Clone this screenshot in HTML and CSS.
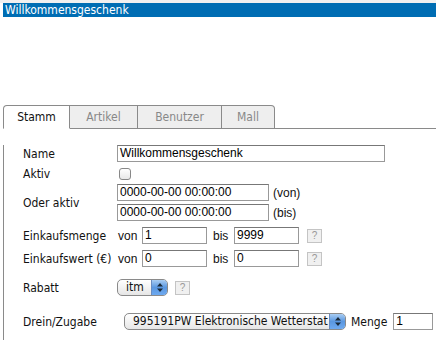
FILE: index.html
```html
<!DOCTYPE html>
<html lang="de">
<head>
    <meta charset="UTF-8">
    <title>Willkommensgeschenk</title>
    <link rel="stylesheet" href="styles.css">
</head>
<body>
    <div class="topstrip"></div>
    <div class="titlebar">Willkommensgeschenk</div>

    <div class="tabs">
        <div class="tab active first">Stamm</div>
        <div class="tab">Artikel</div>
        <div class="tab">Benutzer</div>
        <div class="tab last">Mall</div>
        <div class="tabline"></div>
    </div>

    <div class="panel">
        <div class="row r-name">
            <label class="lbl">Name</label>
            <span class="field wide">Willkommensgeschenk</span>
        </div>
        <div class="row r-aktiv">
            <label class="lbl">Aktiv</label>
            <span class="check"></span>
        </div>
        <div class="row r-oder">
            <label class="lbl">Oder aktiv</label>
            <div class="stack">
                <div class="line"><span class="field date">0000-00-00 00:00:00</span><span class="suffix">(von)</span></div>
                <div class="line"><span class="field date">0000-00-00 00:00:00</span><span class="suffix">(bis)</span></div>
            </div>
        </div>
        <div class="row r-menge">
            <label class="lbl">Einkaufsmenge</label>
            <span class="word">von</span>
            <span class="field small">1</span>
            <span class="word bis">bis</span>
            <span class="field small">9999</span>
            <span class="help">?</span>
        </div>
        <div class="row r-wert">
            <label class="lbl">Einkaufswert (€)</label>
            <span class="word">von</span>
            <span class="field small">0</span>
            <span class="word bis">bis</span>
            <span class="field small">0</span>
            <span class="help">?</span>
        </div>
        <div class="row r-rabatt">
            <label class="lbl">Rabatt</label>
            <span class="select sel-itm"><span class="seltext">itm</span><span class="arrows"><svg width="8" height="11" viewBox="0 0 8 11"><path d="M4 1 L7 4.5 H1 Z M4 10 L7 6.5 H1 Z" fill="#1a2a3a"/></svg></span></span>
            <span class="help">?</span>
        </div>
        <div class="row r-drein">
            <label class="lbl lbl-drein">Drein/Zugabe</label>
            <span class="select sel-drein"><span class="seltext">995191PW Elektronische Wetterstat</span><span class="arrows"><svg width="8" height="11" viewBox="0 0 8 11"><path d="M4 1 L7 4.5 H1 Z M4 10 L7 6.5 H1 Z" fill="#1a2a3a"/></svg></span></span>
            <span class="word menge">Menge</span>
            <span class="field qty">1</span>
        </div>
    </div>
</body>
</html>
```

FILE: styles.css
```css
body {
    margin: 0;
    background: #fff;
    font-family: "Liberation Sans", Arial, sans-serif;
    font-size: 12px;
    color: #111;
    overflow: hidden;
}
.topstrip {
    height: 3px;
    background: #f0f0f0;
}
.titlebar {
    margin-left: 3px;
    height: 14px;
    line-height: 14px;
    padding-left: 2px;
    background: #006db3;
    color: #fff;
    font-family: "DejaVu Sans Condensed", "Liberation Sans", sans-serif;
    font-size: 12px;
}
.tabs {
    display: flex;
    margin: 88px 0 0 3px;
    height: 24px;
}
.tab {
    box-sizing: border-box;
    height: 24px;
    line-height: 22px;
    border: 1px solid #8a8a8a;
    border-left: none;
    background: #eee;
    color: #888;
    text-align: center;
    font-family: "DejaVu Sans Condensed", "Liberation Sans", sans-serif;
    font-size: 12px;
}
.tab:nth-child(1) { width: 67px; }
.tab:nth-child(2) { width: 68px; }
.tab:nth-child(3) { width: 84px; }
.tab:nth-child(4) { width: 53px; }
.tab.first {
    border-left: 1px solid #8a8a8a;
    border-top-left-radius: 4px;
}
.tab.last {
    border-top-right-radius: 4px;
}
.tab.active {
    background: #fff;
    color: #111;
    border-bottom-color: #fff;
}
.tabline {
    flex: 1;
    align-self: flex-end;
    border-bottom: 1px solid #8a8a8a;
}
.panel {
    margin-left: 3px;
    border-left: 1px solid #8a8a8a;
    padding-left: 19px;
    height: 211px;
    font-family: "DejaVu Sans Condensed", "Liberation Sans", sans-serif;
    font-size: 12px;
}
.row {
    display: flex;
    align-items: center;
}
.lbl {
    width: 94px;
    flex: none;
}
.field {
    box-sizing: border-box;
    display: inline-block;
    height: 17px;
    line-height: 15px;
    border: 1px solid #999;
    border-top-color: #777;
    padding-left: 2px;
    font-family: "Liberation Sans", Arial, sans-serif;
    font-size: 12px;
    color: #000;
    background: #fff;
    white-space: nowrap;
    overflow: hidden;
}
.wide { width: 268px; }
.date { width: 152px; }
.small { width: 65px; }
.qty { width: 40px; }
.r-name { margin-top: 16px; }
.r-aktiv { margin-top: 4px; height: 15px; }
.check {
    box-sizing: border-box;
    width: 12px;
    height: 12px;
    margin-left: 2px;
    border: 1px solid #888;
    border-radius: 3px;
    background: linear-gradient(#fff, #e8e8e8);
}
.r-oder { margin-top: 3px; }
.stack {
    display: flex;
    flex-direction: column;
    gap: 3px;
}
.line {
    display: flex;
    align-items: center;
}
.suffix {
    margin-left: 4px;
    font-family: "Liberation Sans", Arial, sans-serif;
}
.word {
    font-family: "Liberation Sans", Arial, sans-serif;
    margin-left: 1px;
    width: 24px;
}
.word.bis {
    width: 21px;
    margin-left: 6px;
}
.r-menge { margin-top: 6px; }
.r-wert { margin-top: 6px; }
.help {
    box-sizing: border-box;
    width: 15px;
    height: 14px;
    margin-left: 8px;
    border: 1px solid #c4c4c4;
    background: #f0f0f0;
    color: #999;
    font-family: "Liberation Sans", Arial, sans-serif;
    font-size: 10px;
    line-height: 12px;
    text-align: center;
}
.r-rabatt { margin-top: 12px; }
.select {
    box-sizing: border-box;
    display: inline-flex;
    align-items: stretch;
    height: 17px;
    border: 1px solid #8a8a8a;
    border-radius: 5px;
    background: linear-gradient(#fff, #e6e6e6);
    overflow: hidden;
    font-family: "DejaVu Sans Condensed", "Liberation Sans", sans-serif;
    font-size: 12px;
}
.seltext {
    flex: 1;
    padding-left: 9px;
    line-height: 15px;
    white-space: nowrap;
    overflow: hidden;
}
.arrows {
    width: 15px;
    flex: none;
    display: flex;
    align-items: center;
    justify-content: center;
    border-left: 1px solid #6a8cc0;
    background: linear-gradient(#a9cdf3, #5a97e0 50%, #6eaaf0);
}
.sel-itm { width: 51px; }
.sel-itm .seltext { padding-left: 8px; }
.r-rabatt .help { margin-left: 7px; }
.r-drein { margin-top: 17px; }
.lbl-drein { width: 101px; }
.sel-drein { width: 222px; }
.sel-drein .seltext { padding-left: 8px; }
.word.menge {
    width: auto;
    margin-left: 5px;
    margin-right: 6px;
    font-family: "DejaVu Sans Condensed", "Liberation Sans", sans-serif;
}
```
